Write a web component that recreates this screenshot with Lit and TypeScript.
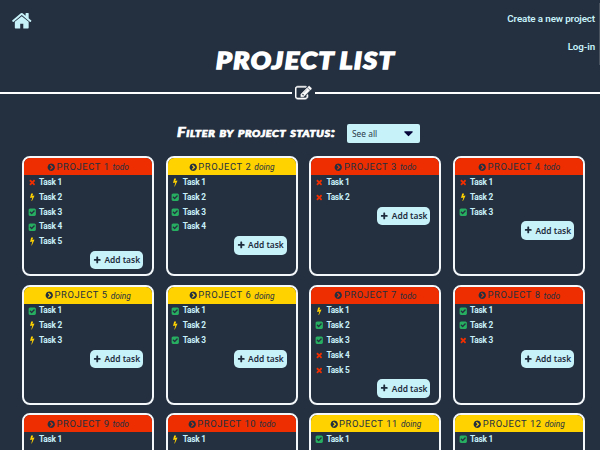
import { LitElement, html, css, svg } from "lit";
import { customElement, property } from "lit/decorators.js";

const ICONS: Record<string, string> = {
  home: "M1472 992v480q0 26-19 45t-45 19h-384v-384h-256v384h-384q-26 0-45-19t-19-45v-480q0-1 .5-3t.5-3l575-474 575 474q1 2 1 6zm223-69l-62 74q-8 9-21 11h-3q-13 0-21-7l-692-577-692 577q-12 8-24 7-13-2-21-11l-62-74q-8-10-7-23.5t11-21.5l719-599q32-26 76-26t76 26l244 204v-195q0-14 9-23t23-9h192q14 0 23 9t9 23v408l219 182q10 8 11 21.5t-7 23.5z",
  doing: "M1333 566q18 20 7 44l-540 1157q-13 25-42 25-4 0-14-2-17-5-25.5-19t-4.5-30l197-808-406 101q-4 1-12 1-18 0-31-11-18-15-13-39l201-825q4-14 16-23t28-9h328q19 0 32 12.5t13 29.5q0 8-5 18l-171 463 396-98q8-2 12-2 19 0 34 15z",
  todo: "M1490 1322q0 40-28 68l-136 136q-28 28-68 28t-68-28l-294-294-294 294q-28 28-68 28t-68-28l-136-136q-28-28-28-68t28-68l294-294-294-294q-28-28-28-68t28-68l136-136q28-28 68-28t68 28l294 294 294-294q28-28 68-28t68 28l136 136q28 28 28 68t-28 68l-294 294 294 294q28 28 28 68z",
  plus: "M1600 736v192q0 40-28 68t-68 28h-416v416q0 40-28 68t-68 28h-192q-40 0-68-28t-28-68v-416h-416q-40 0-68-28t-28-68v-192q0-40 28-68t68-28h416v-416q0-40 28-68t68-28h192q40 0 68 28t28 68v416h416q40 0 68 28t28 68z",
  done: "M813 1299l614-614q19-19 19-45t-19-45l-102-102q-19-19-45-19t-45 19l-467 467-211-211q-19-19-45-19t-45 19l-102 102q-19 19-19 45t19 45l358 358q19 19 45 19t45-19zm851-883v960q0 119-84.5 203.5t-203.5 84.5h-960q-119 0-203.5-84.5t-84.5-203.5v-960q0-119 84.5-203.5t203.5-84.5h960q119 0 203.5 84.5t84.5 203.5z",
  chevron: "M845 1395l454-454q19-19 19-45t-19-45l-454-454q-19-19-45-19t-45 19l-102 102q-19 19-19 45t19 45l307 307-307 307q-19 19-19 45t19 45l102 102q19 19 45 19t45-19zm819-499q0 209-103 385.5t-279.5 279.5-385.5 103-385.5-103-279.5-279.5-103-385.5 103-385.5 279.5-279.5 385.5-103 385.5 103 279.5 279.5 103 385.5z",
  edit: "M888 1184l116-116-152-152-116 116v56h96v96h56zm440-720q-16-16-33 1l-350 350q-17 17-1 33t33-1l350-350q17-17 1-33zm80 594v190q0 119-84.5 203.5t-203.5 84.5h-832q-119 0-203.5-84.5t-84.5-203.5v-832q0-119 84.5-203.5t203.5-84.5h832q63 0 117 25 15 7 18 23 3 17-9 29l-49 49q-14 14-32 8-23-6-45-6h-832q-66 0-113 47t-47 113v832q0 66 47 113t113 47h832q66 0 113-47t47-113v-126q0-13 9-22l64-64q15-15 35-7t20 29zm-96-738l288 288-672 672h-288v-288zm444 132l-92 92-288-288 92-92q28-28 68-28t68 28l152 152q28 28 28 68t-28 68z",
  caret: "M1408 704q0 26-19 45l-448 448q-19 19-45 19t-45-19l-448-448q-19-19-19-45t19-45 45-19h896q26 0 45 19t19 45z",
};

const icon = (name: string) =>
  html`<svg class="icon ${name}" viewBox="0 0 1792 1792" aria-hidden="true">${svg`<path d=${ICONS[name]} />`}</svg>`;

type Status = "todo" | "doing" | "done";
interface Project {
  id: number;
  status: Status;
  tasks: Status[];
  locked?: boolean;
}

const PROJECTS: Project[] = [
  { id: 1, status: "todo", tasks: ["todo", "doing", "done", "done", "doing"] },
  { id: 2, status: "doing", tasks: ["doing", "done", "done", "done"] },
  { id: 3, status: "todo", tasks: ["todo", "todo"] },
  { id: 4, status: "todo", tasks: ["todo", "doing", "done"] },
  { id: 5, status: "doing", tasks: ["done", "doing", "doing"] },
  { id: 6, status: "doing", tasks: ["done", "doing", "done"] },
  { id: 7, status: "todo", tasks: ["doing", "done", "done", "todo", "todo"] },
  { id: 8, status: "todo", tasks: ["done", "done", "todo"] },
  { id: 9, status: "todo", tasks: ["doing"], locked: true },
  { id: 10, status: "todo", tasks: ["doing"], locked: true },
  { id: 11, status: "doing", tasks: ["done"], locked: true },
  { id: 12, status: "doing", tasks: ["done"], locked: true },
];

@customElement("project-card")
class ProjectCard extends LitElement {
  @property({ attribute: false }) project!: Project;

  static styles = css`
    :host {
      display: block;
      box-sizing: border-box;
      height: 120px;
      border: 2px solid #f4f8fa;
      border-radius: 8px;
      overflow: hidden;
    }
    .icon { fill: currentColor; flex: none; }
    .head {
      display: flex;
      align-items: center;
      justify-content: center;
      height: 17px;
      color: #243040;
      font: 400 9.4px/18px Roboto, sans-serif;
    }
    .head.todo { background: #ee2e00; }
    .head.doing { background: #ffd200; }
    .chevron { width: 8.5px; height: 8.5px; margin: 1px 1px 0 0; }
    .name { letter-spacing: 0.6px; }
    .state { font-size: 8.4px; font-style: italic; margin: 1px 0 0 3px; }
    .tasks { list-style: none; margin: 0; padding: 0 0 0 4px; }
    .task {
      display: flex;
      align-items: center;
      height: 14.8px;
      color: #c8f0fa;
      font: 700 8.3px/15px Roboto, sans-serif;
      letter-spacing: -0.24px;
    }
    .mark { display: flex; justify-content: center; width: 8px; margin-right: 3px; }
    .mark .todo { width: 8.5px; height: 8.5px; color: #ee2e00; }
    .mark .doing { width: 8.5px; height: 8.5px; color: #ffd200; }
    .mark .done { width: 8.5px; height: 8.5px; color: #27ae60; }
    .add {
      display: flex;
      align-items: center;
      justify-content: center;
      gap: 3px;
      width: 53px;
      height: 18.5px;
      margin: 2px 9px 0 auto;
      padding: 0;
      border: 0;
      border-radius: 5px;
      background: #c8f2fa;
      color: #1d2b3c;
      font: 600 8.4px/18px "Noto Sans", sans-serif;
      white-space: nowrap;
    }
    .plus { width: 8.5px; height: 8.5px; }
  `;

  render() {
    const { id, status, tasks, locked } = this.project;
    return html`
      <div class="head ${status}">
        ${icon("chevron")}<span class="name">PROJECT ${id}</span><span class="state">${status}</span>
      </div>
      <ul class="tasks">
        ${tasks.map((t, i) => html`<li class="task"><span class="mark">${icon(t)}</span>Task ${i + 1}</li>`)}
      </ul>
      ${locked ? null : html`<button class="add">${icon("plus")}Add task</button>`}
    `;
  }
}

@customElement("app-root")
class AppRoot extends LitElement {
  static styles = css`
    :host {
      display: block;
      position: relative;
      box-sizing: border-box;
      height: 450px;
      overflow: hidden;
      background: #243040;
      color: #fff;
      font-family: Roboto, sans-serif;
    }
    .icon { fill: currentColor; flex: none; }
    .thumb {
      position: absolute;
      top: 3px;
      right: 0;
      width: 1px;
      height: 62px;
      background: #4a5460;
    }
    .top {
      display: flex;
      justify-content: space-between;
      height: 46px;
      padding: 10px 5px 0 11px;
      box-sizing: border-box;
      color: #c8f2fa;
    }
    .home { width: 21.5px; height: 21.5px; }
    .links {
      display: flex;
      flex-direction: column;
      align-items: flex-end;
      gap: 11.5px;
      padding-top: 0.5px;
      font: 600 9.8px/16.5px Roboto, sans-serif;
      letter-spacing: -0.12px;
    }
    .title {
      margin: 0;
      height: 36px;
      padding-left: 10px;
      text-align: center;
      font: italic 900 23.5px/28px Lato, sans-serif;
      letter-spacing: 1.4px;
      word-spacing: -2px;
      -webkit-text-stroke: 1.5px #fff;
      stroke-linejoin: round;
      transform: scaleX(1.14);
    }
    .rule { display: flex; align-items: center; height: 22px; gap: 3px; }
    .line { flex: 1; height: 2px; background: #fff; }
    .line:first-child { flex: none; width: 292px; }
    .edit { width: 16.5px; height: 16.5px; stroke: #fff; stroke-width: 60; }
    .filter {
      display: flex;
      align-items: center;
      height: 19px;
      margin: 20px 0 13px 177px;
    }
    .label {
      width: 170px;
      margin-top: -2px;
      font: italic 900 13.5px/19px Lato, sans-serif;
      font-variant: small-caps;
      letter-spacing: 0.55px;
      white-space: nowrap;
      -webkit-text-stroke: 0.7px #fff;
      transform: scaleX(1.2);
      transform-origin: left;
    }
    .select {
      display: flex;
      align-items: center;
      justify-content: space-between;
      box-sizing: border-box;
      width: 73px;
      height: 19px;
      padding: 0 4px 0 5px;
      border-radius: 2px;
      background: #c8f2fa;
      color: #2b3a48;
      font: 400 8.4px/19px "Noto Sans", sans-serif;
    }
    .caret { width: 15px; height: 15px; color: #05053a; }
    .grid {
      display: grid;
      grid-template-columns: repeat(4, 132px);
      column-gap: 11.7px;
      row-gap: 8.5px;
      padding-left: 22px;
    }
  `;

  render() {
    return html`
      <nav class="top">
        ${icon("home")}
        <div class="links"><span>Create a new project</span><span>Log-in</span></div>
      </nav>
      <h1 class="title">PROJECT LIST</h1>
      <div class="rule"><span class="line"></span>${icon("edit")}<span class="line"></span></div>
      <div class="filter">
        <span class="label">Filter by project status:</span>
        <span class="select">See all${icon("caret")}</span>
      </div>
      <main class="grid">
        ${PROJECTS.map((p) => html`<project-card .project=${p}></project-card>`)}
      </main>
      <span class="thumb"></span>
    `;
  }
}
